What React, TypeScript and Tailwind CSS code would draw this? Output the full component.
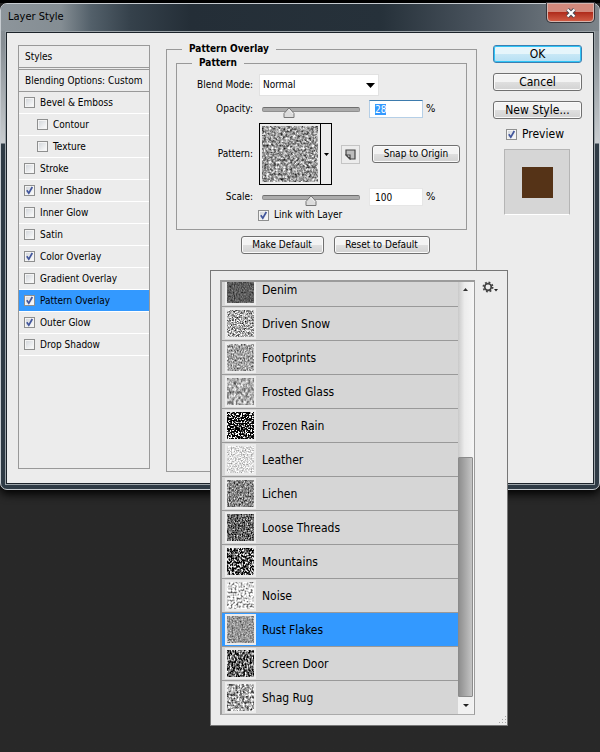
import { useEffect, useRef, useState } from "react";
import type { ReactNode } from "react";

type Texture = { fx: number; fy: number; gain: number; bias: number; seed: number };

const textures: Record<string, Texture> = {
  Denim: { fx: 0.95, fy: 0.5, gain: 0.6, bias: 0.06, seed: 3 },
  "Driven Snow": { fx: 0.7, fy: 0.7, gain: 1.9, bias: -0.28, seed: 8 },
  Footprints: { fx: 0.75, fy: 0.5, gain: 1.2, bias: 0.04, seed: 5 },
  "Frosted Glass": { fx: 0.42, fy: 0.3, gain: 1.1, bias: 0.12, seed: 9 },
  "Frozen Rain": { fx: 0.7, fy: 0.6, gain: 7, bias: -3.4, seed: 2 },
  Leather: { fx: 0.7, fy: 0.7, gain: 0.9, bias: 0.42, seed: 6 },
  Lichen: { fx: 0.8, fy: 0.5, gain: 1.3, bias: -0.12, seed: 11 },
  "Loose Threads": { fx: 0.7, fy: 0.6, gain: 1.6, bias: -0.4, seed: 13 },
  Mountains: { fx: 0.55, fy: 0.5, gain: 3.4, bias: -1.35, seed: 14 },
  Noise: { fx: 0.5, fy: 0.5, gain: 2, bias: -0.14, seed: 17 },
  "Rust Flakes": { fx: 0.6, fy: 0.6, gain: 0.9, bias: 0.14, seed: 19 },
  "Screen Door": { fx: 0.6, fy: 0.35, gain: 2.4, bias: -0.8, seed: 21 },
  "Shag Rug": { fx: 0.45, fy: 0.4, gain: 1.7, bias: -0.2, seed: 23 },
  Current: { fx: 0.42, fy: 0.42, gain: 1.4, bias: -0.1, seed: 31 },
};

function Swatch({ name, size }: { name: string; size: number }) {
  const t = textures[name];
  const id = "tx-" + name.replace(/ /g, "-");
  const row = `${t.gain} 0 0 0 ${t.bias} `;
  return (
    <svg width={size} height={size} viewBox={`0 0 ${size} ${size}`} aria-hidden="true" className="block shrink-0">
      <filter id={id} x="0" y="0" width="100%" height="100%" colorInterpolationFilters="sRGB">
        <feTurbulence type="fractalNoise" baseFrequency={`${t.fx} ${t.fy}`} numOctaves={3} seed={t.seed} />
        <feColorMatrix values={row + row + row + "0 0 0 0 1"} />
      </filter>
      <rect width={size} height={size} filter={`url(#${id})`} />
    </svg>
  );
}

function Check({ checked, children, className = "" }: { checked?: boolean; children: ReactNode; className?: string }) {
  return (
    <label className={"flex items-center gap-[5px] " + className}>
      <span className="grid">
        <input
          type="checkbox"
          defaultChecked={checked}
          className="peer size-[11px] appearance-none border border-[#8e8f8f] bg-linear-to-br from-[#cfd3d8] to-white shadow-[inset_0_0_0_1px_#f4f4f4] [grid-area:1/1]"
        />
        <svg viewBox="0 0 11 11" className="pointer-events-none invisible size-[11px] [grid-area:1/1] peer-checked:visible" fill="none" aria-hidden="true">
          <path d="M2.8 5.2 4.8 8.2 8.3 2" stroke="#42569c" strokeWidth="1.7" />
        </svg>
      </span>
      <span>{children}</span>
    </label>
  );
}

const plain =
  "rounded-[3px] border border-[#707070] bg-linear-to-b from-[#f3f3f3] from-50% via-[#dfdfdf] via-50% to-[#d2d2d2] shadow-[inset_0_0_0_1px_#fafafa]";

function Slider({ label, value, max, onChange }: { label: string; value: number; max: number; onChange: (v: number) => void }) {
  return (
    <div className="relative flex w-[104px] items-center px-[3px]">
      <input
        type="range"
        aria-label={label}
        min={0}
        max={max}
        value={value}
        onChange={(e) => onChange(Number(e.target.value))}
        className="h-[5px] w-full appearance-none rounded-[2px] border border-[#8f8f8f] border-t-[#6f6f6f] bg-[#ababab] [&::-webkit-slider-thumb]:size-3 [&::-webkit-slider-thumb]:appearance-none"
      />
      <div className="pointer-events-none absolute inset-x-[3px] top-0">
        <svg
          width="12"
          height="12"
          viewBox="0 0 12 12"
          className="-translate-x-1/2"
          style={{ marginLeft: `${(value / max) * 100}%` }}
          aria-hidden="true"
        >
          <path d="M6 .8 11 6.5V10.5H1V6.5Z" fill="#dcdcdc" stroke="#777" strokeWidth="1" strokeLinejoin="round" />
          <path d="M6 2.3 9.8 6.8" stroke="#f8f8f8" strokeWidth=".8" />
        </svg>
      </div>
    </div>
  );
}

const effects: { name: string; on?: boolean; sub?: boolean }[] = [
  { name: "Bevel & Emboss" },
  { name: "Contour", sub: true },
  { name: "Texture", sub: true },
  { name: "Stroke" },
  { name: "Inner Shadow", on: true },
  { name: "Inner Glow" },
  { name: "Satin" },
  { name: "Color Overlay", on: true },
  { name: "Gradient Overlay" },
  { name: "Pattern Overlay", on: true },
  { name: "Outer Glow", on: true },
  { name: "Drop Shadow" },
];

function StyleList() {
  return (
    <nav aria-label="Styles" className="min-h-[424px] w-[132px] shrink-0 self-start border border-[#999]">
      <h2 className="flex h-[22px] items-center border-b border-[#999] pl-[6px]">Styles</h2>
      <h2 className="mt-px flex h-[23px] items-center border-y border-[#999] pl-[6px]">Blending Options: Custom</h2>
      <ul>
        {effects.map((e) => (
          <li
            key={e.name}
            className={
              "flex h-[22px] items-center border-b border-white " +
              (e.sub ? "pl-[18px] " : "pl-[5px] ") +
              (e.name === "Pattern Overlay" ? "bg-[#3399ff]" : "")
            }
          >
            <Check checked={e.on}>{e.name}</Check>
          </li>
        ))}
      </ul>
    </nav>
  );
}

const labelCell = "w-[76px] shrink-0 text-right";
const field = "h-[18px] w-[54px] border pl-[5px] outline-none";

function PatternForm() {
  const [opacity, setOpacity] = useState(28);
  const [scale, setScale] = useState(100);
  const opacityField = useRef<HTMLInputElement>(null);

  useEffect(() => {
    opacityField.current?.focus();
    opacityField.current?.select();
  }, []);

  return (
    <fieldset className="-mt-[3px] min-h-[430px] w-[311px] shrink-0 border border-[#999] px-[9px] pb-2">
      <legend className="ml-[6px] h-[14px] px-[7px] text-[10px] leading-[14px] font-bold">Pattern Overlay</legend>
      <fieldset className="border border-[#999] pt-[4px] pb-[7px]">
        <legend className="ml-[15px] h-[14px] px-[7px] text-[10px] leading-[14px] font-bold">Pattern</legend>
        <div className="flex items-center gap-[6px]">
          <label htmlFor="blend" className={labelCell}>Blend Mode:</label>
          <div className="grid items-center">
            <select id="blend" className="h-[22px] w-[120px] appearance-none border border-[#e2e2e2] bg-white pl-[3px] [grid-area:1/1]">
              <option>Normal</option>
            </select>
            <svg width="9" height="5" viewBox="0 0 9 5" className="pointer-events-none mr-1 justify-self-end [grid-area:1/1]" aria-hidden="true">
              <path d="M0 0H9L4.5 5Z" fill="#000" />
            </svg>
          </div>
        </div>
        <div className="mt-[4px] flex items-center gap-[6px]">
          <label htmlFor="opacity" className={labelCell}>Opacity:</label>
          <Slider label="Opacity slider" value={opacity} max={100} onChange={setOpacity} />
          <span className="flex items-center gap-[3px]">
            <input
              id="opacity"
              ref={opacityField}
              value={opacity}
              onChange={(e) => setOpacity(Number(e.target.value) || 0)}
              className={field + " border-[#b5cfe7] border-t-[#3d7bad] bg-white selection:bg-[#3399ff] selection:text-white"}
            />
            <span className="text-[11px]">%</span>
          </span>
        </div>
        <div className="mt-[5px] flex items-center gap-[6px]">
          <span className={labelCell}>Pattern:</span>
          <button type="button" aria-label="Pattern picker" className="flex h-[62px] w-[73px] items-stretch border border-black bg-[#ececec]">
            <span className="flex items-center justify-center border-r border-black px-[2px]">
              <Swatch name="Current" size={56} />
            </span>
            <span className="flex flex-1 items-center justify-center">
              <svg width="5" height="3" viewBox="0 0 5 3" aria-hidden="true">
                <path d="M0 0H5L2.5 3Z" fill="#000" />
              </svg>
            </span>
          </button>
          <button type="button" aria-label="New preset from pattern" className="ml-[3px] flex size-[19px] items-center justify-center border border-[#c4c4c4] bg-[#ececec]">
            <svg width="11" height="11" viewBox="0 0 11 11" aria-hidden="true">
              <path d="M1 1H10V10H5L1 6Z" fill="#bdbdbd" stroke="#444" strokeWidth="1.2" />
              <path d="M1 6H5V10Z" fill="#ececec" stroke="#444" strokeWidth="1.2" />
            </svg>
          </button>
          <button type="button" className={"ml-[6px] h-[18px] w-[88px] " + plain}>Snap to Origin</button>
        </div>
        <div className="mt-[3px] flex items-center gap-[6px]">
          <label htmlFor="scale" className={labelCell}>Scale:</label>
          <Slider label="Scale slider" value={scale} max={200} onChange={setScale} />
          <span className="flex items-center gap-[3px]">
            <input
              id="scale"
              value={scale}
              onChange={(e) => setScale(Number(e.target.value) || 0)}
              className={field + " border-[#e6e6e6] bg-white"}
            />
            <span className="text-[11px]">%</span>
          </span>
        </div>
        <Check checked className="mt-[2px] ml-[81px] h-[14px]">Link with Layer</Check>
      </fieldset>
      <div className="mt-[6px] flex justify-center gap-[10px] pl-[27px]">
        <button type="button" className={"h-[18px] w-[83px] " + plain}>Make Default</button>
        <button type="button" className={"h-[18px] w-[96px] " + plain}>Reset to Default</button>
      </div>
    </fieldset>
  );
}

function Actions() {
  return (
    <div className="flex w-[89px] flex-col gap-[10px] text-[12px]">
      <button
        type="button"
        className="h-[18px] rounded-[3px] border border-[#3c7fb1] bg-linear-to-b from-[#e6f5fb] from-50% via-[#c9e8f6] via-50% to-[#b5dff4] shadow-[inset_0_0_0_1px_#2fc5f7]"
      >
        OK
      </button>
      <button type="button" className={"h-[18px] " + plain}>Cancel</button>
      <button type="button" className={"h-[18px] " + plain}>New Style...</button>
      <Check checked className="-mt-[2px] ml-[13px] h-[14px]">Preview</Check>
      <div className="-mt-[2px] ml-[11px] flex size-[66px] items-center justify-center border border-[#b5b5b5] border-b-white bg-[#d6d6d6]">
        <div className="size-[31px] bg-[#553317]" />
      </div>
    </div>
  );
}

const presets = [
  "Denim",
  "Driven Snow",
  "Footprints",
  "Frosted Glass",
  "Frozen Rain",
  "Leather",
  "Lichen",
  "Loose Threads",
  "Mountains",
  "Noise",
  "Rust Flakes",
  "Screen Door",
  "Shag Rug",
];

function PresetPicker() {
  return (
    <aside className="absolute top-[270px] left-[210px] flex w-[298px] border border-[#777] bg-[#ececec] pt-[9px] pb-[10px] pl-[9px]">
      <div className="flex h-[435px] w-[255px] border-2 border-r border-b border-[#9b9b9b] border-b-[#aaa]">
        <ul className="flex min-w-0 flex-1 flex-col justify-end overflow-hidden text-[12px]">
          {presets.map((p) => (
            <li key={p} className="h-[34px] shrink-0 border-b border-[#999] last:h-[33px] last:border-b-0">
              <button
                type="button"
                className={"flex size-full items-center gap-[6px] pl-[3px] " + (p === "Rust Flakes" ? "bg-[#3399ff]" : "bg-[#d6d6d6]")}
              >
                <span className="bg-[#ececec] p-[2px]">
                  <Swatch name={p} size={27} />
                </span>
                {p}
              </button>
            </li>
          ))}
        </ul>
        <div className="flex w-[16px] flex-col bg-linear-to-r from-[#c9c9c9] via-[#ececec] via-40% to-[#f6f6f6] pr-px">
          <button type="button" aria-label="Scroll up" className="flex h-[14px] items-center justify-center">
            <svg width="5" height="3" viewBox="0 0 5 3" aria-hidden="true">
              <path d="M0 3H5L2.5 0Z" fill="#333" />
            </svg>
          </button>
          <div className="mt-auto h-[240px] rounded-[1px] border border-[#8b8b8b] bg-linear-to-r from-[#8f8f8f] to-[#c4c4c4]" />
          <button type="button" aria-label="Scroll down" className="flex h-[17px] items-center justify-center bg-[#f1f1f1]">
            <svg width="6" height="3" viewBox="0 0 6 3" aria-hidden="true">
              <path d="M0 0H6L3 3Z" fill="#222" />
            </svg>
          </button>
        </div>
      </div>
      <div className="flex flex-1 flex-col justify-between">
        <button type="button" aria-label="Preset options" className="ml-[7px] self-start">
          <svg width="17" height="13" viewBox="0 0 17 13" aria-hidden="true">
            <circle cx="6" cy="7" r="3.3" fill="none" stroke="#444" strokeWidth="1.7" />
            <circle cx="6" cy="7" r="4.7" fill="none" stroke="#444" strokeWidth="1.6" strokeDasharray="1.85 1.84" />
            <path d="M12 9H16L14 11.5Z" fill="#222" />
          </svg>
        </button>
        <svg width="8" height="8" viewBox="0 0 8 8" className="-mb-[9px] self-end" fill="#a5a5a5" aria-hidden="true">
          <path d="M6 0h1v1H6zM3 3h1v1H3zM6 3h1v1H6zM0 6h1v1H0zM3 6h1v1H3zM6 6h1v1H6z" />
        </svg>
      </div>
    </aside>
  );
}

export default function App() {
  return (
    <main className="relative min-h-screen bg-[#282828] bg-linear-to-b from-black from-[3px] to-[#282828] to-[3px] pt-[3px] font-['DejaVu_Sans_Condensed','DejaVu_Sans',sans-serif] text-[10px] leading-[12px] text-black [font-stretch:condensed]">
      <section
        aria-label="Layer Style"
        className="rounded-[7px] border border-[#c6cbd0] bg-[linear-gradient(to_bottom,#858d93_0,#878e94_40px,#c9cdd0_139px,#2f3b45_140px)] px-[4px] pb-[4px] shadow-[0_4px_10px_#000]"
      >
        <header className="-mx-[4px] flex h-[27px] items-start justify-between rounded-t-[6px] bg-[linear-gradient(to_right,#8d959b_0,#848d93_60px,#53606a_90px,#35414b_130px,#242e37_190px,#26313a_380px,#4a545e_480px,#7d858b_600px)] pl-[7px]">
          <h1 className="pt-[6px] text-[11px] leading-[14px]">Layer Style</h1>
          <button
            type="button"
            aria-label="Close"
            className="-mt-px mr-[5px] flex h-[19px] w-[47px] items-center justify-center rounded-b-[4px] border border-[#d6b5ae] bg-linear-to-b from-[#d3897c] from-45% via-[#b02c1c] via-50% to-[#cf5a44] shadow-[0_0_0_1px_#36343a]"
          >
            <svg width="12" height="10" viewBox="0 0 12 10" aria-hidden="true">
              <path d="M2.5 1.5 9.5 8.5M9.5 1.5 2.5 8.5" stroke="#4a4a55" strokeWidth="4" />
              <path d="M2.5 1.5 9.5 8.5M9.5 1.5 2.5 8.5" stroke="#fff" strokeWidth="2.2" />
            </svg>
          </button>
        </header>
        <div className="border border-[#9ba3a8]">
          <div className="flex gap-4 border border-[#1c232a] bg-[#ececec] pt-[12px] pr-[11px] pb-[11px] pl-[11px]">
            <StyleList />
            <PatternForm />
            <Actions />
          </div>
        </div>
      </section>
      <PresetPicker />
    </main>
  );
}
